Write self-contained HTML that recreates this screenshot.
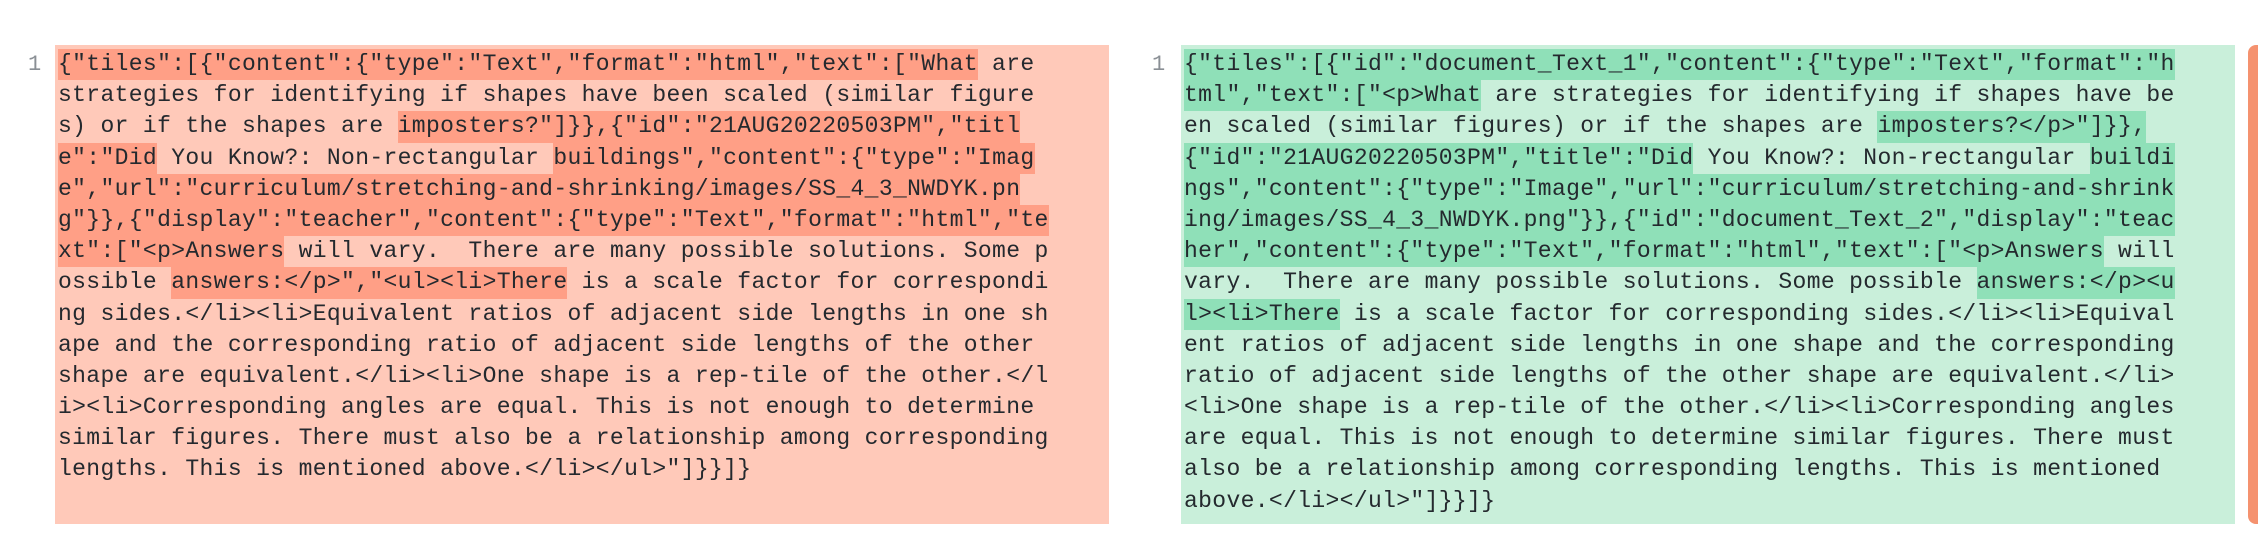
<!DOCTYPE html>
<html><head><meta charset="utf-8"><style>
html,body{margin:0;padding:0;background:#fff;width:2258px;height:560px;overflow:hidden}
.panel{position:absolute;top:45px;height:479px;width:1054px}
.l{left:55px;background:#ffc9b9}
.r{left:1181px;background:#c9efda}
.num{position:absolute;top:45px;font:22px "Liberation Mono",monospace;color:#8a8f95;line-height:31.2px;padding-top:4px}
.code{position:absolute;top:49px;font:23px "Liberation Mono",monospace;letter-spacing:0.35px;color:#24292e;line-height:31.2px}
.code div{white-space:pre;height:31.2px}
.l2 .h{background:#ff9f86}
.r2 .h{background:#8fe0b8}
.h{display:inline-block;height:31.2px}
.bar{position:absolute;left:2248px;top:45px;width:20px;height:479px;background:#f5926f;border-radius:8px 0 0 8px}
</style></head><body>
<div class="panel l"></div>
<div class="panel r"></div>
<div class="bar"></div>
<div class="num" style="left:28px">1</div>
<div class="num" style="left:1152px">1</div>
<div class="code l2" style="left:58px">
<div><span class="h">{"tiles":[{"content":{"type":"Text","format":"html","text":["What</span> are</div>
<div>strategies for identifying if shapes have been scaled (similar figure</div>
<div>s) or if the shapes are <span class="h">imposters?"]}},{"id":"21AUG20220503PM","titl</span></div>
<div><span class="h">e":"Did</span> You Know?: Non-rectangular <span class="h">buildings","content":{"type":"Imag</span></div>
<div><span class="h">e","url":"curriculum/stretching-and-shrinking/images/SS_4_3_NWDYK.pn</span></div>
<div><span class="h">g"}},{"display":"teacher","content":{"type":"Text","format":"html","te</span></div>
<div><span class="h">xt":["&lt;p&gt;Answers</span> will vary.  There are many possible solutions. Some p</div>
<div>ossible <span class="h">answers:&lt;/p&gt;","&lt;ul&gt;&lt;li&gt;There</span> is a scale factor for correspondi</div>
<div>ng sides.&lt;/li&gt;&lt;li&gt;Equivalent ratios of adjacent side lengths in one sh</div>
<div>ape and the corresponding ratio of adjacent side lengths of the other</div>
<div>shape are equivalent.&lt;/li&gt;&lt;li&gt;One shape is a rep-tile of the other.&lt;/l</div>
<div>i&gt;&lt;li&gt;Corresponding angles are equal. This is not enough to determine</div>
<div>similar figures. There must also be a relationship among corresponding</div>
<div>lengths. This is mentioned above.&lt;/li&gt;&lt;/ul&gt;"]}}]}</div>
</div>
<div class="code r2" style="left:1184px">
<div><span class="h">{"tiles":[{"id":"document_Text_1","content":{"type":"Text","format":"h</span></div>
<div><span class="h">tml","text":["&lt;p&gt;What</span> are strategies for identifying if shapes have be</div>
<div>en scaled (similar figures) or if the shapes are <span class="h">imposters?&lt;/p&gt;"]}},</span></div>
<div><span class="h">{"id":"21AUG20220503PM","title":"Did</span> You Know?: Non-rectangular <span class="h">buildi</span></div>
<div><span class="h">ngs","content":{"type":"Image","url":"curriculum/stretching-and-shrink</span></div>
<div><span class="h">ing/images/SS_4_3_NWDYK.png"}},{"id":"document_Text_2","display":"teac</span></div>
<div><span class="h">her","content":{"type":"Text","format":"html","text":["&lt;p&gt;Answers</span> will</div>
<div>vary.  There are many possible solutions. Some possible <span class="h">answers:&lt;/p&gt;&lt;u</span></div>
<div><span class="h">l&gt;&lt;li&gt;There</span> is a scale factor for corresponding sides.&lt;/li&gt;&lt;li&gt;Equival</div>
<div>ent ratios of adjacent side lengths in one shape and the corresponding</div>
<div>ratio of adjacent side lengths of the other shape are equivalent.&lt;/li&gt;</div>
<div>&lt;li&gt;One shape is a rep-tile of the other.&lt;/li&gt;&lt;li&gt;Corresponding angles</div>
<div>are equal. This is not enough to determine similar figures. There must</div>
<div>also be a relationship among corresponding lengths. This is mentioned</div>
<div>above.&lt;/li&gt;&lt;/ul&gt;"]}}]}</div>
</div>
</body></html>
